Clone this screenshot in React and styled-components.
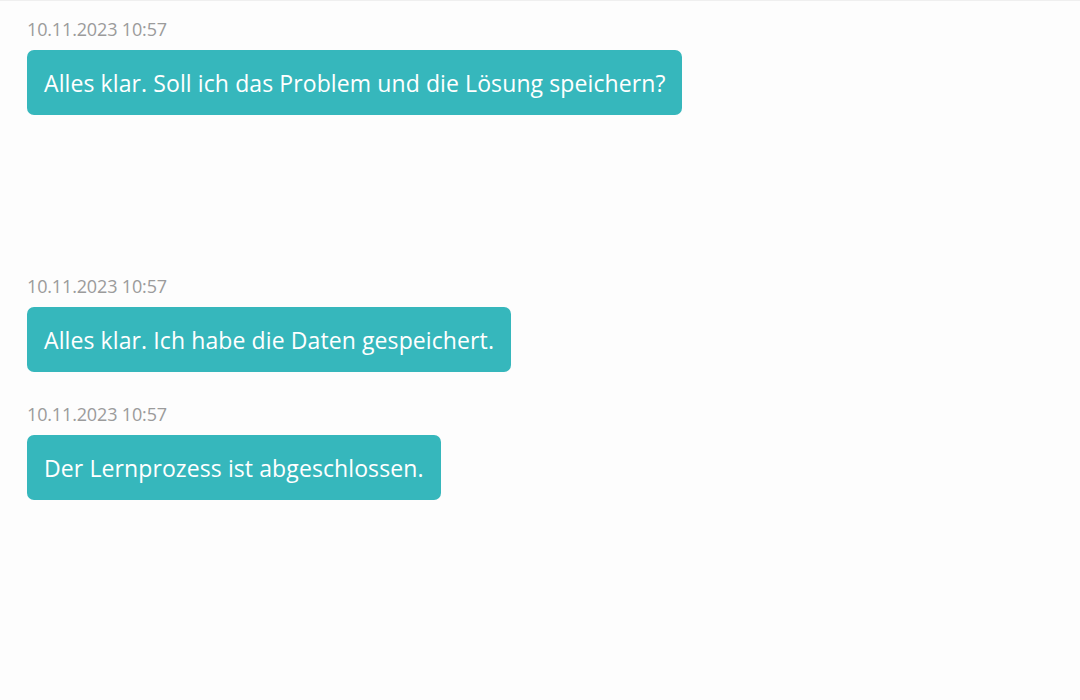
import React from "react";
import styled, { createGlobalStyle } from "styled-components";

const Global = createGlobalStyle`
  html, body { margin: 0; padding: 0; background: #fdfdfd; }
  body { font-family: "Open Sans", "Noto Sans", sans-serif; }
`;

const Page = styled.main`
  min-height: 700px;
  box-sizing: border-box;
  border-top: 1px solid #efefef;
  padding: 17px 27px 0;
  display: flex;
  flex-direction: column;
  gap: 31px;
`;

const Group = styled.section`
  display: flex;
  flex-direction: column;
  align-items: flex-start;
  gap: 10px;
`;

const Spacer = styled.div`
  height: ${(p) => p.$h}px;
  margin-top: -31px;
`;

const Time = styled.div`
  font-size: 18px;
  line-height: 22px;
  color: #9b9b9b;
  letter-spacing: -0.15px;
`;

const Bubble = styled.div`
  background: #36b7bc;
  color: #ffffff;
  border-radius: 7px;
  padding: 0 17px;
  height: 65px;
  display: flex;
  align-items: center;
  font-size: 23px;
  letter-spacing: 0.1px;
`;

const messages = [
  { t: "10.11.2023 10:57", m: "Alles klar. Soll ich das Problem und die Lösung speichern?" },
  { spacer: 129 },
  { t: "10.11.2023 10:57", m: "Alles klar. Ich habe die Daten gespeichert." },
  { t: "10.11.2023 10:57", m: "Der Lernprozess ist abgeschlossen." },
];

export default function App() {
  return (
    <>
      <Global />
      <Page>
        {messages.map((x, i) =>
          x.spacer ? (
            <Spacer key={i} $h={x.spacer} />
          ) : (
            <Group key={i}>
              <Time>{x.t}</Time>
              <Bubble>{x.m}</Bubble>
            </Group>
          )
        )}
      </Page>
    </>
  );
}
